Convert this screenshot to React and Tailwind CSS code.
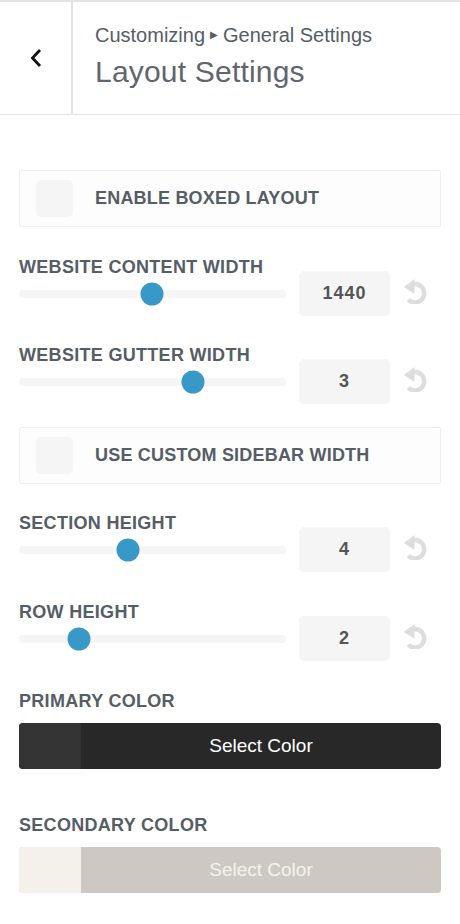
import React from "react";

const font = { fontFamily: '"Liberation Sans", Arial, sans-serif' };

function ResetIcon() {
  return (
    <svg width="26" height="26" viewBox="1 1 22 22" className="shrink-0">
      <path
        d="M11 6.2 A7.8 7.8 0 1 1 6.4 19.4"
        fill="none"
        stroke="#dddddd"
        strokeWidth="3.8"
      />
      <path d="M2.5 8.6 L11.6 1.8 L11.6 14.4 Z" fill="#dddddd" />
    </svg>
  );
}

function CheckRow({ label }) {
  return (
    <div className="flex items-center h-[57px] border border-[#eeeeee] bg-[#fdfdfd] rounded-[2px] pl-[16px]">
      <div className="w-[37px] h-[37px] rounded-[5px] bg-[#f5f5f5]" />
      <div className="ml-[22px] text-[18px] font-bold tracking-[0.2px] text-[#555d66]">
        {label}
      </div>
    </div>
  );
}

function SliderRow({ label, value, thumb }) {
  return (
    <div>
      <div className="h-[20px] leading-[20px] text-[18px] font-bold tracking-[0.3px] text-[#555d66]">
        {label}
      </div>
      <div className="flex items-center mt-[-6px]">
        <div className="relative w-[267px] h-[8px] rounded-full bg-[#f5f5f5]">
          <div
            className="absolute top-1/2 w-[23px] h-[23px] -translate-y-1/2 -translate-x-1/2 rounded-full bg-[#3899c8]"
            style={{ left: thumb }}
          />
        </div>
        <div className="ml-[13px] w-[91px] h-[45px] rounded-[5px] bg-[#f5f5f5] flex items-center justify-center text-[18px] tracking-[1px] font-bold text-[#555555]">
          {value}
        </div>
        <div className="ml-[12px] mt-[-5px]">
          <ResetIcon />
        </div>
      </div>
    </div>
  );
}

function ColorRow({ label, swatch, bg, text }) {
  return (
    <div>
      <div className="h-[20px] leading-[20px] text-[18px] font-bold tracking-[0.3px] text-[#555d66]">
        {label}
      </div>
      <div className={`mt-[12px] flex h-[46px] rounded-[4px] overflow-hidden ${bg}`}>
        <div className={`w-[62px] ${swatch}`} />
        <div className={`flex-1 flex items-center justify-center text-[19px] ${text}`}>
          Select Color
        </div>
      </div>
    </div>
  );
}

export default function App() {
  return (
    <div className="w-[460px] min-h-[924px] bg-white" style={font}>
      <div className="flex h-[115px] border-t-2 border-b border-[#e2e4e7]">
        <div className="w-[73px] border-r-2 border-[#e2e4e7] flex items-center justify-center">
          <svg width="16" height="22" viewBox="0 0 16 22">
            <path d="M12 3 L4.5 11 L12 19" fill="none" stroke="#111" strokeWidth="2.8" />
          </svg>
        </div>
        <div className="pl-[22px] pt-[21px] text-[#555d66]">
          <div className="flex items-center text-[20px] leading-[24px]">
            <span>Customizing</span>
            <span className="mx-[5px] text-[10px]">▶</span>
            <span>General Settings</span>
          </div>
          <div className="text-[30px] leading-[36px] mt-[7px] text-[#5f666e] tracking-[0.2px]">
            Layout Settings
          </div>
        </div>
      </div>

      <div className="px-[19px] pt-[55px] pb-[30px]">
        <CheckRow label="ENABLE BOXED LAYOUT" />
        <div className="mt-[30px]">
          <SliderRow label="WEBSITE CONTENT WIDTH" value="1440" thumb={133} />
        </div>
        <div className="mt-[29px]">
          <SliderRow label="WEBSITE GUTTER WIDTH" value="3" thumb={174} />
        </div>
        <div className="mt-[23px]">
          <CheckRow label="USE CUSTOM SIDEBAR WIDTH" />
        </div>
        <div className="mt-[29px]">
          <SliderRow label="SECTION HEIGHT" value="4" thumb={109} />
        </div>
        <div className="mt-[30px]">
          <SliderRow label="ROW HEIGHT" value="2" thumb={60} />
        </div>
        <div className="mt-[30px]">
          <ColorRow
            label="PRIMARY COLOR"
            swatch="bg-[#333333]"
            bg="bg-[#282828]"
            text="text-white"
          />
        </div>
        <div className="mt-[46px]">
          <ColorRow
            label="SECONDARY COLOR"
            swatch="bg-[#f4f0ea]"
            bg="bg-[#cdc9c2]"
            text="text-[#f4f2ee]"
          />
        </div>
      </div>
    </div>
  );
}
